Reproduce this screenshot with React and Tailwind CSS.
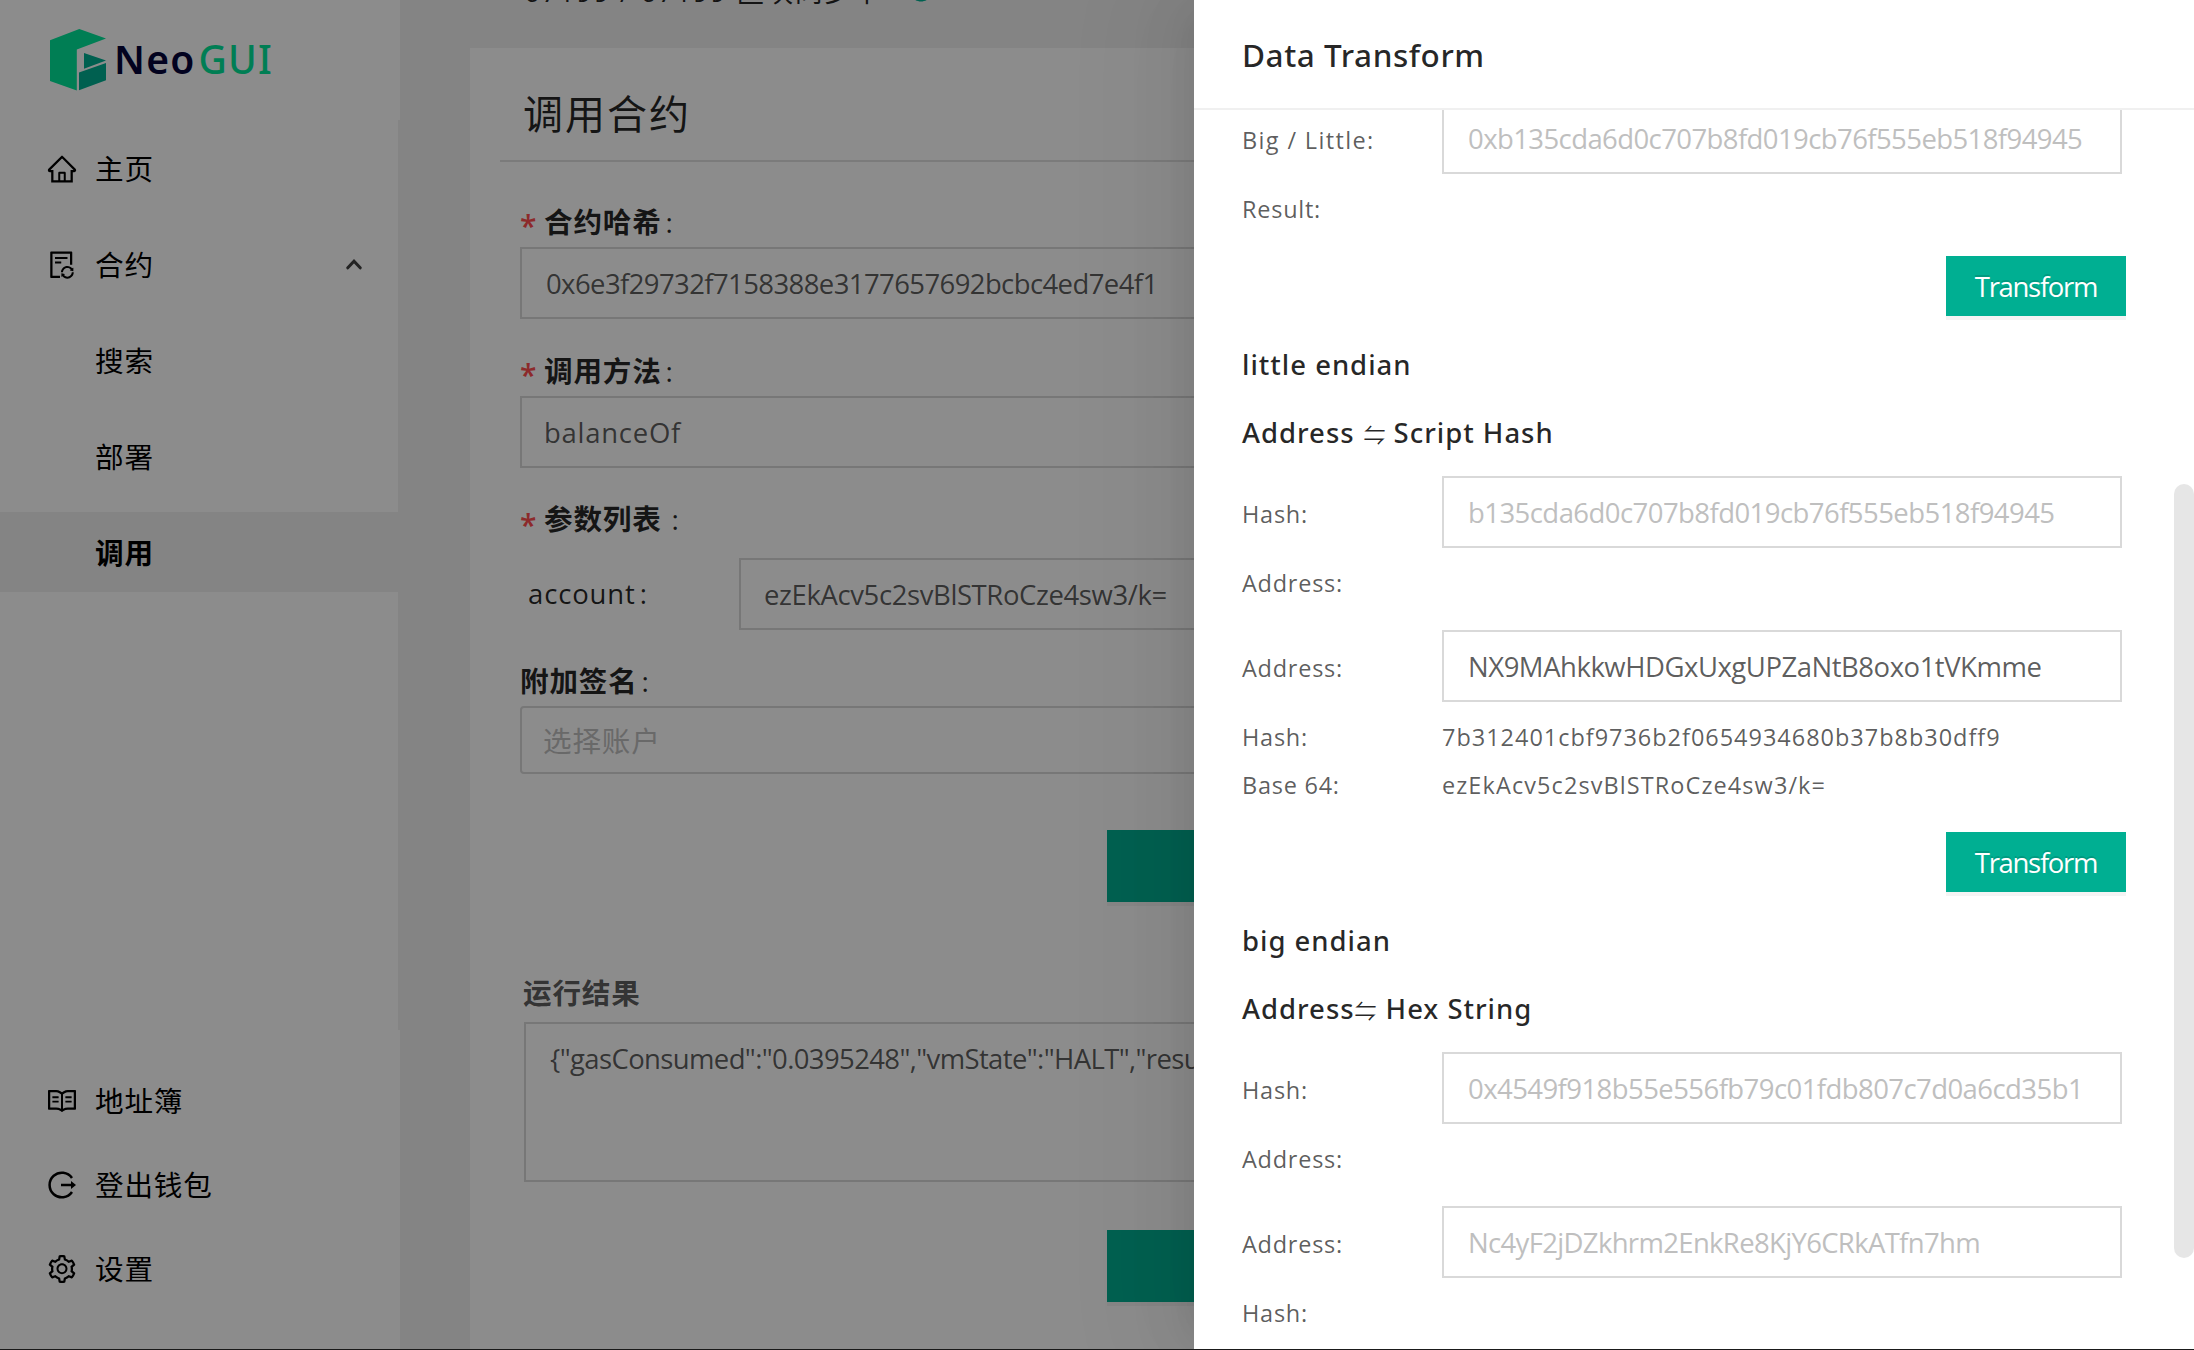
import React from "react";
import {
  AiOutlineHome,
  AiOutlineFileSync,
  AiOutlineRead,
  AiOutlineSetting,
  AiOutlineSync,
} from "react-icons/ai";

function LogoMark() {
  return (
    <svg className="h-[62px] w-14" viewBox="0 0 56 62">
      <path d="M0 11.2 29.3 0 56 9.5 26.8 20.6V61.5L0 52Z" fill="#00e599" />
      <path d="M34 24 56 31.6 34 39.8Z" fill="#00af92" />
      <path d="M29 43.6 56 34V51.3L29 61.3Z" fill="#00af92" />
    </svg>
  );
}

function LogoutIcon() {
  return (
    <svg className="size-7" viewBox="0 0 28 28" fill="none" stroke="currentColor" strokeWidth="2.5">
      <path d="M24 7A12.3 12.3 0 1 0 24 21" />
      <path d="M13 14H24" />
      <path d="M23 10 28 14l-5 4Z" fill="currentColor" stroke="none" />
    </svg>
  );
}

function IconSlot({ children }) {
  return <span className="mt-0.5 mr-[19px] flex size-7 items-center justify-center *:shrink-0">{children}</span>;
}

function MenuItem({ icon, label, active, open }) {
  return (
    <div className={`mb-4 flex h-20 w-[400px] items-center pl-12 ${active ? "bg-[#f0f0f0] font-bold" : ""}`}>
      <IconSlot>{icon}</IconSlot>
      <span className="pt-0.5">{label}</span>
      {open && (
        <svg className="mr-[38px] ml-auto h-3 w-4" viewBox="0 0 16 12" fill="none" stroke="#404040" strokeWidth="3" strokeLinecap="round">
          <path d="M1.8 9.8 8 3.2l6.2 6.6" />
        </svg>
      )}
    </div>
  );
}

function FooterItem({ icon, label }) {
  return (
    <div className="flex h-[84px] items-center pl-12">
      <IconSlot>{icon}</IconSlot>
      <span className="pt-0.5">{label}</span>
    </div>
  );
}

function Sidebar() {
  return (
    <aside className="flex w-[400px] shrink-0 flex-col bg-white text-[28.6px] tracking-[0.8px] text-black">
      <div className="flex h-[120px] items-center pl-[50px]">
        <LogoMark />
        <div className="ml-2 pb-0.5 font-['Noto_Sans'] text-[39px] leading-[60px]">
          <span className="font-semibold tracking-[1.2px] text-[#04053a]">Neo</span>
          <span className="ml-[3px] font-medium tracking-[1.2px] text-[#00e599]">GUI</span>
        </div>
      </div>
      <nav className="h-[910px] w-[400px] border-r-2 border-[#f0f0f0] pt-2">
        <MenuItem icon={<AiOutlineHome size={32} />} label="主页" />
        <MenuItem icon={<AiOutlineFileSync size={32} />} label="合约" open />
        <MenuItem label="搜索" />
        <MenuItem label="部署" />
        <MenuItem label="调用" active />
      </nav>
      <div className="pt-7">
        <FooterItem icon={<AiOutlineRead size={32} />} label="地址簿" />
        <FooterItem icon={<LogoutIcon />} label="登出钱包" />
        <FooterItem icon={<AiOutlineSetting size={32} />} label="设置" />
      </div>
    </aside>
  );
}

function Label({ children, required, starClass = "pt-1", colonClass = "ml-1" }) {
  return (
    <div className="flex h-[49px] text-[28px] leading-12 text-black/85">
      {required && <span className={`w-6 text-[30px] font-semibold text-[#ff4d4f] ${starClass}`}>*</span>}
      <span className="text-[28.6px] font-bold tracking-[0.8px]">{children}</span>
      <span className={colonClass}>:</span>
    </div>
  );
}

function Main() {
  const field = "flex h-[72px] items-center border-2 border-[#d9d9d9] bg-white pt-0.5 text-[27.5px] text-black/65";
  return (
    <main className="flex flex-1 flex-col bg-[#f0f0f0] px-[70px]">
      <div className="flex h-12 shrink-0 items-start pl-[54px]">
        <div className="-mt-[29px] flex items-center text-[27.5px] leading-[42px] tracking-[1.7px] text-black/85">
          <span>67199 / 67199 区块同步中</span>
          <AiOutlineSync className="mb-1 ml-6 text-[#00af92]" size={28} />
        </div>
      </div>
      <section className="flex-1 bg-white">
        <h1 className="mx-[30px] flex h-[114px] items-center border-b-2 border-[#e0e0e0] pt-5 pl-[23px] text-[40px] tracking-[2px] text-black/85">
          调用合约
        </h1>
        <form className="flex flex-col px-[50px] pt-9">
          <Label required>合约哈希</Label>
          <div className={`${field} pl-[24px] tracking-[-0.6px]`}>0x6e3f29732f7158388e3177657692bcbc4ed7e4f1</div>
          <div className="h-7" />
          <Label required>调用方法</Label>
          <div className={`${field} pl-[22px] tracking-[0.73px]`}>balanceOf</div>
          <div className="h-[27px]" />
          <Label required starClass="pt-1.5" colonClass="ml-2.5">参数列表</Label>
          <div className="mt-3.5 flex items-center">
            <div className="w-[219px] pl-2 text-[27.5px] tracking-[0.85px] text-black/85">
              account<span className="ml-1">:</span>
            </div>
            <div className={`${field} flex-1 pl-[23px] tracking-[-0.4px]`}>ezEkAcv5c2svBlSTRoCze4sw3/k=</div>
          </div>
          <div className="h-[27px]" />
          <Label>附加签名</Label>
          <div className="flex h-[68px] items-center rounded border-2 border-[#d9d9d9] pt-0.5 pl-[21px] text-[28.6px] tracking-[0.8px] text-[#bfbfbf]">
            选择账户
          </div>
          <div className="mx-auto mt-14 h-[72px] w-[380px] bg-[#00af92] shadow-[0_4px_0_rgba(0,0,0,0.045)]" />
          <div className="mt-[67px] pl-[3px] text-[28.6px] leading-12 font-bold tracking-[0.8px] text-black/65">运行结果</div>
          <div className="mt-[5px] ml-[4px] h-40 overflow-hidden border-2 border-[#d9d9d9] pt-3.5 pl-[24px] text-[27.5px] leading-[42px] tracking-[-0.63px] whitespace-nowrap text-black/65">
            {'{"gasConsumed":"0.0395248","vmState":"HALT","result":'}
          </div>
          <div className="mx-auto mt-12 h-[72px] w-[380px] bg-[#00af92] shadow-[0_4px_0_rgba(0,0,0,0.045)]" />
        </form>
      </section>
    </main>
  );
}

function InputRow({ label, children, filled, labelClass = "tracking-[0.75px]", className = "" }) {
  return (
    <div className="flex items-center text-[23.5px] text-black/65">
      <span className={`w-[200px] pt-1.5 ${labelClass}`}>{label}</span>
      <div
        className={`flex h-[72px] w-[680px] items-center border-2 border-[#d9d9d9] pt-0.5 pl-[24px] text-[27.5px] ${filled ? "text-black/65" : "text-[#bfbfbf]"} ${className}`}
      >
        {children}
      </div>
    </div>
  );
}

function TextRow({ label, children, className = "" }) {
  return (
    <div className="flex text-[23.5px] leading-12 tracking-[0.75px] text-black/65">
      <span className="w-[200px]">{label}</span>
      <span className={className}>{children}</span>
    </div>
  );
}

function TransformButton() {
  return (
    <button
      type="button"
      className="mt-[23px] mr-12 flex h-15 w-[180px] items-center justify-center self-end bg-[#00af92] pt-0.5 text-[27.5px] tracking-[-1.3px] text-white shadow-[0_4px_0_rgba(0,0,0,0.043)] [text-shadow:0_-2px_0_rgba(0,0,0,0.12)]"
    >
      Transform
    </button>
  );
}

function Headings({ endian, title }) {
  return (
    <div className="mt-[15px] mb-[9px] font-['Noto_Sans','Noto_Sans_CJK_SC',sans-serif] text-[27.5px] leading-[68px] font-medium tracking-[0.98px] text-black/85">
      <h3>{endian}</h3>
      <h3 className="flex">{title}</h3>
    </div>
  );
}

function Arrows({ className }) {
  return (
    <span className={`w-[22px] font-['Noto_Sans_CJK_SC'] text-[22px] font-normal tracking-normal ${className}`}>⇋</span>
  );
}

function Drawer() {
  return (
    <div className="absolute inset-y-0 right-0 flex w-[1000px] flex-col bg-white shadow-[-12px_0_32px_-16px_rgba(0,0,0,0.08),-18px_0_56px_0_rgba(0,0,0,0.05),-24px_0_96px_32px_rgba(0,0,0,0.03)]">
      <header className="flex h-[110px] shrink-0 items-center border-b-2 border-[#f0f0f0] pt-0.5 pl-12 font-['Noto_Sans'] text-[31.5px] font-medium tracking-[0.56px] text-black/85">
        Data Transform
      </header>
      <div className="flex min-h-0 flex-1 overflow-hidden">
        <div className="-mt-2 flex flex-1 flex-col pl-12">
          <InputRow label="Big / Little:" labelClass="tracking-[1.35px]" className="tracking-[-0.59px]">0xb135cda6d0c707b8fd019cb76f555eb518f94945</InputRow>
          <div className="h-[11px]" />
          <TextRow label="Result:" />
          <TransformButton />

          <Headings
            endian="little endian"
            title={<>Address<Arrows className="mr-2 ml-[9px]" />Script Hash</>}
          />
          <InputRow label="Hash:" className="tracking-[-0.56px]">b135cda6d0c707b8fd019cb76f555eb518f94945</InputRow>
          <div className="h-[11px]" />
          <TextRow label="Address:" />
          <div className="h-[23px]" />
          <InputRow label="Address:" filled className="tracking-[-0.48px]">NX9MAhkkwHDGxUxgUPZaNtB8oxo1tVKmme</InputRow>
          <div className="h-[11px]" />
          <TextRow label="Hash:" className="tracking-[0.97px]">7b312401cbf9736b2f0654934680b37b8b30dff9</TextRow>
          <TextRow label="Base 64:" className="tracking-[1.08px]">ezEkAcv5c2svBlSTRoCze4sw3/k=</TextRow>
          <TransformButton />

          <Headings
            endian="big endian"
            title={<>Address<Arrows className="mr-[9px]" />Hex String</>}
          />
          <InputRow label="Hash:" className="tracking-[-0.57px]">0x4549f918b55e556fb79c01fdb807c7d0a6cd35b1</InputRow>
          <div className="h-[11px]" />
          <TextRow label="Address:" />
          <div className="h-[23px]" />
          <InputRow label="Address:" className="tracking-[-0.67px]">Nc4yF2jDZkhrm2EnkRe8KjY6CRkATfn7hm</InputRow>
          <div className="h-[11px]" />
          <TextRow label="Hash:" />
        </div>
        <div className="w-5 pt-[374px]">
          <div className="h-[774px] rounded-full bg-[#e6e6e6]" />
        </div>
      </div>
    </div>
  );
}

export default function App() {
  return (
    <div className="relative flex h-[1350px] w-[2194px] overflow-hidden font-['Open_Sans','Noto_Sans_CJK_SC',sans-serif]">
      <Sidebar />
      <Main />
      <div className="absolute inset-0 bg-black/45" />
      <Drawer />
      <div className="absolute inset-x-0 bottom-0 h-px bg-[#1a1a1a]" />
    </div>
  );
}
